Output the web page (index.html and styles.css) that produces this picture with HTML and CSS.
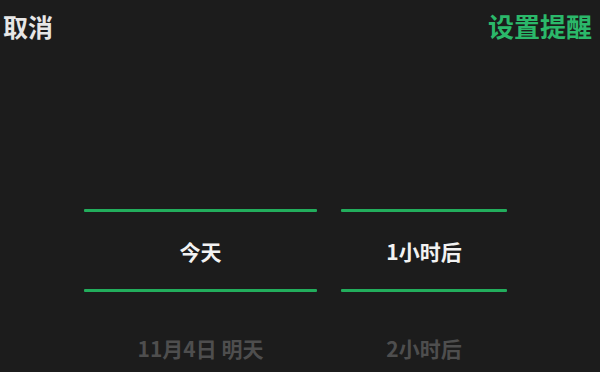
FILE: index.html
```html
<!DOCTYPE html>
<html lang="zh">
<head>
<meta charset="utf-8">
<link rel="stylesheet" href="styles.css">
</head>
<body>
<div class="screen">
  <div class="header">
    <span class="cancel">取消</span>
    <span class="confirm">设置提醒</span>
  </div>
  <div class="picker">
    <div class="col col-date">
      <div class="line"></div>
      <div class="selected">今天</div>
      <div class="line"></div>
      <div class="next">11月4日 明天</div>
    </div>
    <div class="col col-hour">
      <div class="line"></div>
      <div class="selected">1小时后</div>
      <div class="line"></div>
      <div class="next">2小时后</div>
    </div>
  </div>
</div>
</body>
</html>
```
FILE: styles.css
```css
html, body {
  margin: 0;
  padding: 0;
}
body {
  background: #1c1c1c;
  font-family: "Noto Sans CJK SC", "Noto Sans", sans-serif;
  width: 600px;
  height: 372px;
  overflow: hidden;
}
.screen {
  width: 600px;
  height: 372px;
  display: flex;
  flex-direction: column;
}
.header {
  height: 52px;
  display: flex;
  justify-content: space-between;
  align-items: center;
  padding: 0 8px 0 3px;
}
.cancel {
  color: #e6e6e6;
  font-size: 25px;
  font-weight: 700;
  line-height: 30px;
}
.confirm {
  color: #2bb86a;
  font-size: 26px;
  font-weight: 700;
  line-height: 30px;
}
.picker {
  margin-top: 157px;
  display: flex;
  gap: 24px;
  padding-left: 84px;
}
.col {
  display: flex;
  flex-direction: column;
  align-items: stretch;
}
.col-date { width: 233px; }
.col-hour { width: 166px; }
.line {
  height: 3px;
  background: #22ad5c;
  border-radius: 1px;
}
.selected {
  height: 77px;
  display: flex;
  align-items: center;
  justify-content: center;
  color: #f2f2f2;
  font-size: 21px;
  font-weight: 700;
}
.next {
  margin-top: 44px;
  line-height: 24px;
  text-align: center;
  color: #4e4e4e;
  font-size: 21px;
  font-weight: 700;
}
```
